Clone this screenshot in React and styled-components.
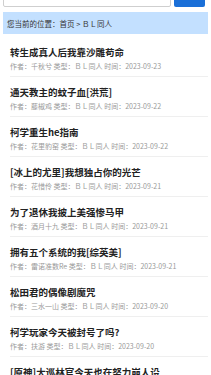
import styled, { createGlobalStyle } from "styled-components";

const GlobalStyle = createGlobalStyle`
  html, body {
    margin: 0;
    padding: 0;
    background: #fff;
    overflow: hidden;
  }
  body {
    font-family: "Noto Sans CJK SC", "Noto Sans", sans-serif;
  }
`;

const books = [
  { title: "转生成真人后我靠沙雕苟命", author: "千秋兮", date: "2023-09-23" },
  { title: "通天教主的蚊子血[洪荒]", author: "藤椒鸡", date: "2023-09-22" },
  { title: "柯学重生he指南", author: "花里豹窑", date: "2023-09-22" },
  { title: "[冰上的尤里]我想独占你的光芒", author: "花惜伶", date: "2023-09-21" },
  { title: "为了退休我披上美强惨马甲", author: "酒月十九", date: "2023-09-21" },
  { title: "拥有五个系统的我[综英美]", author: "雷诺准数Re", date: "2023-09-21" },
  { title: "松田君的偶像剧魔咒", author: "三水一山", date: "2023-09-20" },
  { title: "柯学玩家今天被封号了吗?", author: "扶游", date: "2023-09-20" },
  { title: "[原神]大巡林官今天也在努力崩人设", author: "青柠", date: "2023-09-20" },
];

function App() {
  return (
    <Page>
      <GlobalStyle />
      <SearchBar>
        <SearchInput type="text" />
        <SearchButton>搜索</SearchButton>
      </SearchBar>
      <Crumb>您当前的位置：首页 &gt; ＢＬ同人</Crumb>
      <List>
        {books.map((b) => (
          <Item key={b.title}>
            <Title>{b.title}</Title>
            <Meta>
              作者：{b.author} 类型：ＢＬ同人 时间：{b.date}
            </Meta>
          </Item>
        ))}
      </List>
    </Page>
  );
}

export default App;

const Page = styled.div`
  padding: 0 3px;
`;

const SearchBar = styled.div`
  display: flex;
  gap: 3px;
  margin-top: -18px;
  padding-right: 3px;
`;

const SearchInput = styled.input`
  flex: 1;
  min-width: 0;
  height: 25px;
  box-sizing: border-box;
  border: 1px solid #cfcfcf;
  border-radius: 2px;
  margin: 0;
`;

const SearchButton = styled.button`
  width: 31px;
  height: 25px;
  border: none;
  border-radius: 2px;
  background: #1a6fd8;
  color: #fff;
  font-family: inherit;
  font-size: 8px;
  padding: 0;
`;

const Crumb = styled.div`
  margin-top: 5px;
  height: 22px;
  display: flex;
  align-items: center;
  padding-left: 4px;
  background: #c3e0ff;
  font-size: 7.5px;
  color: #333;
`;

const List = styled.div`
  margin-top: 3px;
  padding-left: 7px;
`;

const Item = styled.div`
  padding: 8px 0 6px;
  border-bottom: 1px solid #efefef;
  display: flex;
  flex-direction: column;
  gap: 3px;
`;

const Title = styled.div`
  font-size: 9.5px;
  line-height: 14px;
  font-weight: bold;
  color: #222;
  white-space: nowrap;
`;

const Meta = styled.div`
  font-size: 7px;
  line-height: 8px;
  color: #999;
  white-space: nowrap;
`;
